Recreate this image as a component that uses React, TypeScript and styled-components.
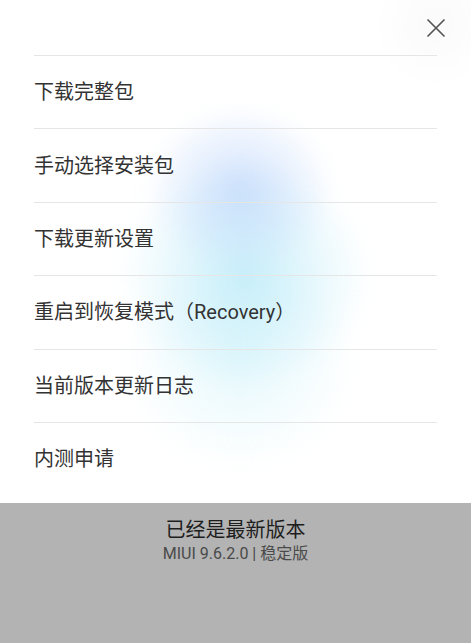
import styled, { createGlobalStyle } from "styled-components";

const GlobalStyle = createGlobalStyle`
  html, body {
    margin: 0;
    padding: 0;
    background: #b3b3b3;
  }
  body {
    font-family: Roboto, "Noto Sans CJK SC", "Noto Sans", sans-serif;
  }
`;

const Page = styled.div`
  width: 471px;
  height: 643px;
  display: flex;
  flex-flow: column;
  overflow: hidden;
`;

const Sheet = styled.div`
  position: relative;
  background: #ffffff;
  padding: 0 34px;
  overflow: hidden;
`;

const Glow = styled.div`
  position: absolute;
  left: 80px;
  top: 80px;
  width: 330px;
  height: 400px;
  pointer-events: none;
  background:
    radial-gradient(ellipse 95px 85px at 160px 110px, rgba(175, 205, 250, 0.6), rgba(175, 205, 250, 0) 100%),
    radial-gradient(ellipse 125px 115px at 165px 195px, rgba(165, 228, 246, 0.6), rgba(165, 228, 246, 0) 100%),
    radial-gradient(ellipse 115px 110px at 160px 280px, rgba(205, 242, 250, 0.5), rgba(205, 242, 250, 0) 100%);
  filter: blur(8px);
`;

const CloseHalo = styled.div`
  position: absolute;
  right: -30px;
  top: -40px;
  width: 130px;
  height: 130px;
  border-radius: 50%;
  background: radial-gradient(circle, rgba(0, 0, 0, 0.02), rgba(0, 0, 0, 0) 70%);
  pointer-events: none;
`;

const Header = styled.div`
  position: relative;
  height: 55px;
  display: flex;
  justify-content: flex-end;
  align-items: flex-start;
  border-bottom: 1px solid #e6e6e6;
`;

const CloseButton = styled.button`
  margin: 17px -10px 0 0;
  padding: 0;
  width: 22px;
  height: 22px;
  border: none;
  background: none;
  display: flex;
  align-items: center;
  justify-content: center;
`;

const List = styled.ul`
  position: relative;
  list-style: none;
  margin: 0;
  padding: 0;
`;

const Item = styled.li<{ $last?: boolean }>`
  height: ${(p) => (p.$last ? "80px" : "73.4px")};
  display: flex;
  align-items: ${(p) => (p.$last ? "flex-start" : "center")};
  padding-top: ${(p) => (p.$last ? "26px" : "0")};
  box-sizing: border-box;
  border-bottom: ${(p) => (p.$last ? "none" : "1px solid #e6e6e6")};
  font-size: 20px;
  color: #333333;
  line-height: 1;
`;

const Footer = styled.div`
  flex: 1;
  background: #b3b3b3;
  display: flex;
  flex-flow: column;
  align-items: center;
  padding-top: 15px;
`;

const Title = styled.span`
  font-size: 20px;
  color: #1e1e1e;
  line-height: 24px;
`;

const Version = styled.span`
  font-size: 16px;
  color: #4a4a4a;
  line-height: 20px;
  margin-top: 2px;
`;

const items = [
  "下载完整包",
  "手动选择安装包",
  "下载更新设置",
  "重启到恢复模式（Recovery）",
  "当前版本更新日志",
  "内测申请",
];

export default function App() {
  return (
    <Page>
      <GlobalStyle />
      <Sheet>
        <CloseHalo />
        <Glow />
        <Header>
          <CloseButton aria-label="close">
            <svg width="20" height="20" viewBox="0 0 20 20">
              <path d="M2 2 L18 18 M18 2 L2 18" stroke="#555" strokeWidth="1.7" strokeLinecap="round" />
            </svg>
          </CloseButton>
        </Header>
        <List>
          {items.map((item, idx) => (
            <Item key={idx} $last={idx === items.length - 1}>
              {item}
            </Item>
          ))}
        </List>
      </Sheet>
      <Footer>
        <Title>已经是最新版本</Title>
        <Version>MIUI 9.6.2.0 | 稳定版</Version>
      </Footer>
    </Page>
  );
}
